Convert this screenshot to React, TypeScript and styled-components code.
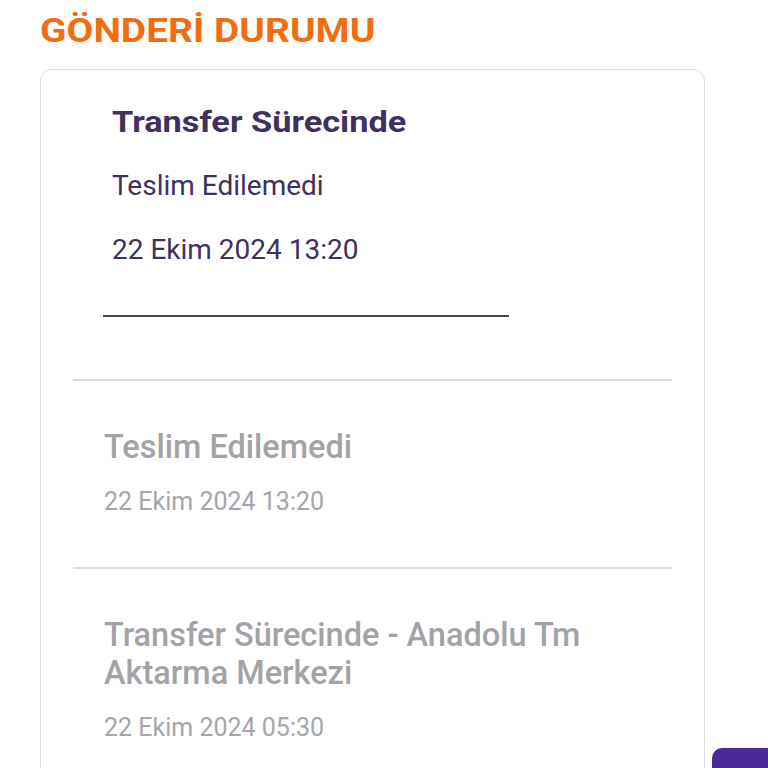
import styled, { createGlobalStyle } from 'styled-components';

const GlobalStyle = createGlobalStyle`
  html, body {
    margin: 0;
    padding: 0;
    background: #ffffff;
    font-family: Roboto, "Noto Sans", sans-serif;
    overflow: hidden;
  }
`;

const Page = styled.div`
  width: 768px;
  height: 768px;
  box-sizing: border-box;
  padding: 10px 0 0 40px;
  position: relative;
  overflow: hidden;
`;

// the bold face in the app renders wider than stock Roboto Bold
const Title = styled.h1`
  margin: 0 0 19px;
  font-size: 34px;
  line-height: 40px;
  font-weight: 700;
  color: #f36d10;
  transform: scaleX(1.145);
  transform-origin: left center;
`;

const Card = styled.div`
  width: 665px;
  box-sizing: border-box;
  border: 1.5px solid #dadada;
  border-radius: 12px;
  background: #fff;
`;

const Current = styled.div`
  padding: 33.5px 0 0 71px;
  display: flex;
  flex-direction: column;
`;

const CurrentTitle = styled.div`
  font-size: 30px;
  line-height: 36px;
  font-weight: 700;
  color: #40305f;
  transform: scaleX(1.145);
  transform-origin: left center;
`;

const CurrentText = styled.div<{ $gap: number }>`
  margin-top: ${(p) => p.$gap}px;
  font-size: 28px;
  line-height: 34px;
  color: #40305f;
`;

const Underline = styled.div`
  margin: 48px 0 0 -9px;
  width: 406px;
  height: 2px;
  background: #4a4458;
`;

const Divider = styled.hr`
  margin: 62px 32px 0;
  border: none;
  height: 2.5px;
  background: #dadada;
`;

const Entry = styled.div`
  padding: 46.5px 40px 50px 63px;
`;

const EntryTitle = styled.div`
  font-size: 32.5px;
  line-height: 38px;
  font-weight: 500;
  color: #a3a3a7;
`;

const EntryDate = styled.div`
  margin-top: 21px;
  font-size: 25px;
  line-height: 30px;
  color: #a6a6aa;
`;

const EntryDivider = styled.hr`
  margin: 0 32px;
  border: none;
  height: 2.5px;
  background: #dadada;
`;

const FloatingButton = styled.button`
  position: absolute;
  left: 712px;
  top: 748px;
  width: 80px;
  height: 60px;
  border: none;
  border-radius: 10px;
  background: #4b2a9b;
`;

const history = [
  { title: 'Teslim Edilemedi', date: '22 Ekim 2024 13:20' },
  { title: 'Transfer Sürecinde - Anadolu Tm Aktarma Merkezi', date: '22 Ekim 2024 05:30' },
];

const App = () => {
  return (
    <>
      <GlobalStyle />
      <Page>
        <Title>GÖNDERİ DURUMU</Title>
        <Card>
          <Current>
            <CurrentTitle>Transfer Sürecinde</CurrentTitle>
            <CurrentText $gap={29}>Teslim Edilemedi</CurrentText>
            <CurrentText $gap={30.3}>22 Ekim 2024 13:20</CurrentText>
            <Underline />
          </Current>
          <Divider />
          {history.map((h, i) => (
            <div key={i}>
              <Entry>
                <EntryTitle>{h.title}</EntryTitle>
                <EntryDate>{h.date}</EntryDate>
              </Entry>
              {i < history.length - 1 && <EntryDivider />}
            </div>
          ))}
        </Card>
        <FloatingButton aria-label="Yardım" />
      </Page>
    </>
  );
};

export default App;
